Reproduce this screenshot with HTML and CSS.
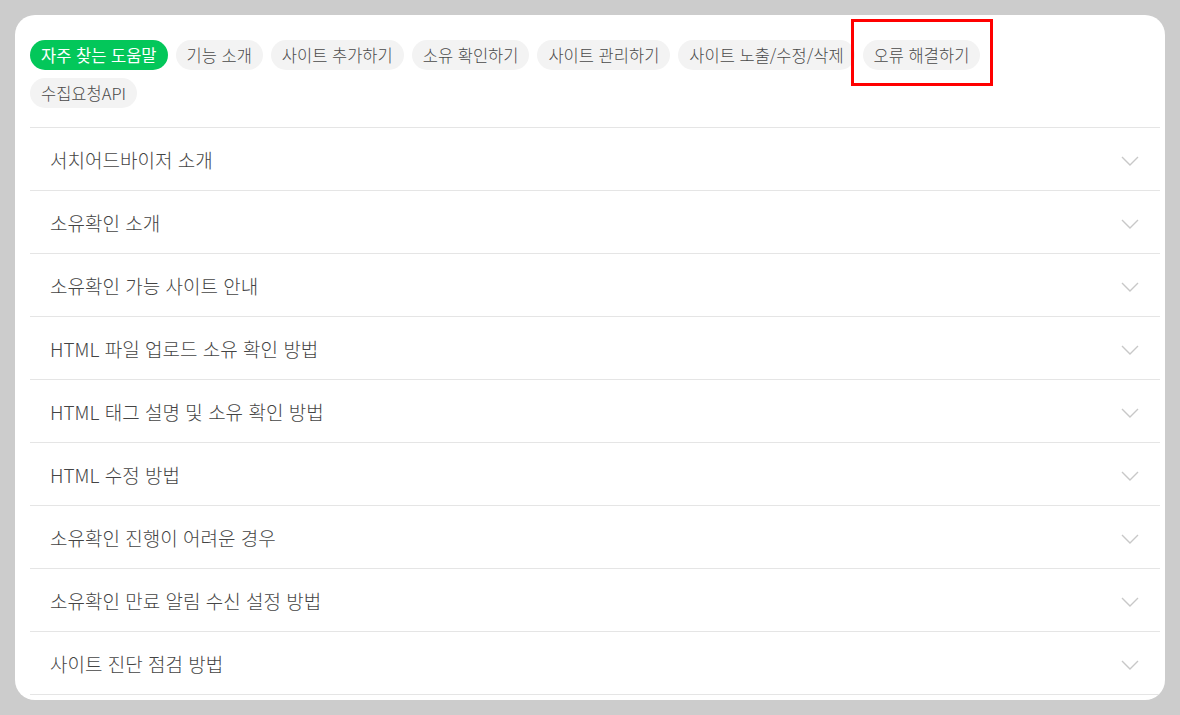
FILE: index.html
```html
<!DOCTYPE html>
<html lang="ko">
<head>
<meta charset="utf-8">
<title>도움말</title>
<link rel="stylesheet" href="styles.css">
</head>
<body>
<div class="card">
  <div class="chips">
    <span class="chip active">자주 찾는 도움말</span>
    <span class="chip">기능 소개</span>
    <span class="chip">사이트 추가하기</span>
    <span class="chip">소유 확인하기</span>
    <span class="chip">사이트 관리하기</span>
    <span class="chip">사이트 노출/수정/삭제</span>
    <span class="chip">오류 해결하기</span>
    <span class="chip">수집요청API</span>
  </div>
  <div class="highlight"></div>
  <ul class="faq">
    <li class="row"><span>서치어드바이저 소개</span><svg class="chev" viewBox="0 0 18 10" width="18" height="10"><path d="M1 1 L9 9 L17 1" fill="none" stroke="#c8c8c8" stroke-width="1.4"/></svg></li>
    <li class="row"><span>소유확인 소개</span><svg class="chev" viewBox="0 0 18 10" width="18" height="10"><path d="M1 1 L9 9 L17 1" fill="none" stroke="#c8c8c8" stroke-width="1.4"/></svg></li>
    <li class="row"><span>소유확인 가능 사이트 안내</span><svg class="chev" viewBox="0 0 18 10" width="18" height="10"><path d="M1 1 L9 9 L17 1" fill="none" stroke="#c8c8c8" stroke-width="1.4"/></svg></li>
    <li class="row"><span>HTML 파일 업로드 소유 확인 방법</span><svg class="chev" viewBox="0 0 18 10" width="18" height="10"><path d="M1 1 L9 9 L17 1" fill="none" stroke="#c8c8c8" stroke-width="1.4"/></svg></li>
    <li class="row"><span>HTML 태그 설명 및 소유 확인 방법</span><svg class="chev" viewBox="0 0 18 10" width="18" height="10"><path d="M1 1 L9 9 L17 1" fill="none" stroke="#c8c8c8" stroke-width="1.4"/></svg></li>
    <li class="row"><span>HTML 수정 방법</span><svg class="chev" viewBox="0 0 18 10" width="18" height="10"><path d="M1 1 L9 9 L17 1" fill="none" stroke="#c8c8c8" stroke-width="1.4"/></svg></li>
    <li class="row"><span>소유확인 진행이 어려운 경우</span><svg class="chev" viewBox="0 0 18 10" width="18" height="10"><path d="M1 1 L9 9 L17 1" fill="none" stroke="#c8c8c8" stroke-width="1.4"/></svg></li>
    <li class="row"><span>소유확인 만료 알림 수신 설정 방법</span><svg class="chev" viewBox="0 0 18 10" width="18" height="10"><path d="M1 1 L9 9 L17 1" fill="none" stroke="#c8c8c8" stroke-width="1.4"/></svg></li>
    <li class="row"><span>사이트 진단 점검 방법</span><svg class="chev" viewBox="0 0 18 10" width="18" height="10"><path d="M1 1 L9 9 L17 1" fill="none" stroke="#c8c8c8" stroke-width="1.4"/></svg></li>
  </ul>
</div>
</body>
</html>
```
FILE: styles.css
```css
html, body {
  margin: 0;
  padding: 0;
  height: 100%;
  overflow: hidden;
}
body {
  background: #cccccc;
  font-family: "Noto Sans CJK KR", "Noto Sans", sans-serif;
  padding: 15px;
  box-sizing: border-box;
}
.card {
  position: relative;
  width: 1150px;
  height: 685px;
  background: #ffffff;
  border-radius: 20px;
  padding: 25px 5px 0 15px;
  box-sizing: border-box;
  overflow: hidden;
}
.chips {
  display: flex;
  flex-wrap: wrap;
  gap: 8px;
  width: 1010px;
  margin-bottom: 19px;
}
.chip {
  display: inline-block;
  height: 30px;
  line-height: 30px;
  padding: 0 11px;
  border-radius: 15px;
  background: #f3f3f3;
  color: #4a4a4a;
  font-size: 16.5px;
  font-weight: 300;
  white-space: nowrap;
}
.chip.active {
  background: #03c75a;
  color: #ffffff;
  font-weight: 400;
}
.highlight {
  position: absolute;
  left: 836px;
  top: 4px;
  width: 142px;
  height: 67px;
  border: 3px solid #ff0000;
  box-sizing: border-box;
}
.faq {
  list-style: none;
  margin: 0;
  padding: 0;
  border-top: 1px solid #e5e5e5;
}
.row {
  display: flex;
  align-items: center;
  justify-content: space-between;
  height: 62px;
  padding: 0 21px 0 20px;
  border-bottom: 1px solid #e5e5e5;
  font-size: 19px;
  font-weight: 300;
  color: #444444;
}
.chev {
  display: block;
  margin-top: 4px;
}
```
